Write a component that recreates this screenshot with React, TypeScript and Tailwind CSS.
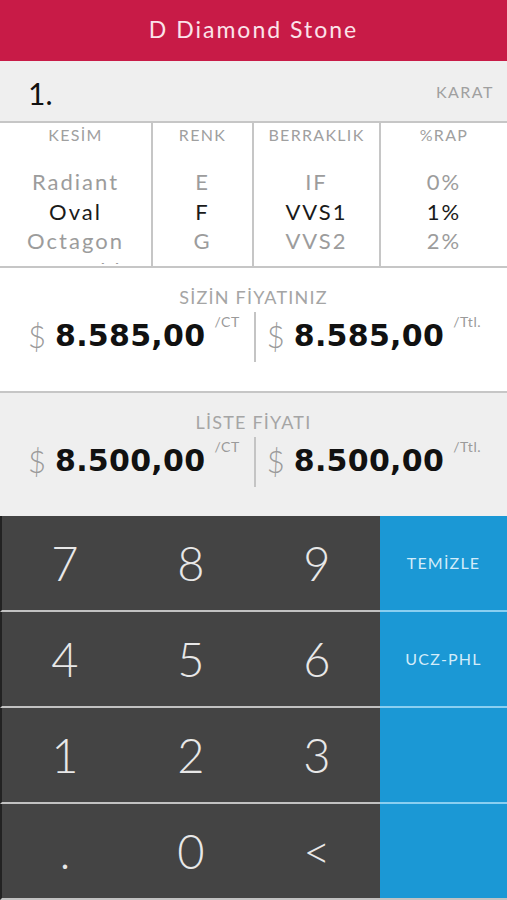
import React from "react";

const cols = [
  { h: "KESİM", items: ["Radiant", "Oval", "Octagon", "Emerald"] },
  { h: "RENK", items: ["E", "F", "G", "H"] },
  { h: "BERRAKLIK", items: ["IF", "VVS1", "VVS2", "VS1"] },
  { h: "%RAP", items: ["0%", "1%", "2%", "3%"] },
];

function Price({ amount, unit }: { amount: string; unit: string }) {
  return (
    <div className="flex items-start">
      <span className="text-[31px] leading-[36px] font-light text-[#9a9a9a] mr-[9px] font-['Lato']">$</span>
      <span className="text-[30px] leading-[36px] font-bold text-[#111] font-['DejaVu_Sans'] tracking-[0.3px]">{amount}</span>
      <span className="text-[14px] leading-[14px] text-[#9a9a9a] ml-[9px] mt-[-3px] font-['Lato'] tracking-[0.5px]">{unit}</span>
    </div>
  );
}

function PriceBlock({ label, amount, bg }: { label: string; amount: string; bg: string }) {
  return (
    <div className={`${bg} h-[123px] flex flex-col items-center pt-[18px]`}>
      <div className="text-[18px] leading-[22px] text-[#a5a5a5] tracking-[1.2px] font-['Lato']">{label}</div>
      <div className="flex items-start mt-[4px] ml-[2px]">
        <div className="mt-[6px]">
          <Price amount={amount} unit="/CT" />
        </div>
        <div className="w-[2px] h-[50px] bg-[#c4c4c4] ml-[14px] mr-[11px]" />
        <div className="mt-[6px]">
          <Price amount={amount} unit="/Ttl." />
        </div>
      </div>
    </div>
  );
}

const keys = [
  ["7", "8", "9", "TEMİZLE"],
  ["4", "5", "6", "UCZ-PHL"],
  ["1", "2", "3", ""],
  [".", "0", "<", ""],
];

export default function App() {
  return (
    <div className="w-[507px] h-[900px] overflow-hidden bg-white font-['Lato',sans-serif]">
      <div className="h-[61px] bg-[#c81b47] flex items-center justify-center pb-[3px]">
        <span className="text-[23px] text-[#fbe3ea] tracking-[2px]">D Diamond Stone</span>
      </div>
      <div className="h-[62px] bg-[#efefef] border-b-2 border-[#c6c6c6] flex items-center justify-between pl-[28px] pr-[13px]">
        <span className="text-[30px] text-[#111] mt-[4px]">1.</span>
        <span className="text-[16px] text-[#a0a0a0] tracking-[1.5px] mt-[2px]">KARAT</span>
      </div>
      <div className="grid grid-cols-[153px_101px_127px_1fr] h-[145px] border-b-2 border-[#c6c6c6]">
        {cols.map((c, i) => (
          <div key={i} className={`flex flex-col items-center ${i < 3 ? "border-r-2 border-[#c6c6c6]" : ""}`}>
            <div className="pt-[2px] h-[22px] text-[16px] leading-[20px] text-[#a0a0a0] tracking-[1.3px]">{c.h}</div>
            <div className="mt-[22px] h-[97px] overflow-hidden flex flex-col items-center w-full">
              {c.items.map((it, j) => (
                <div
                  key={j}
                  className={`h-[29.5px] shrink-0 leading-[29.5px] text-[22px] tracking-[2px] ${j === 1 ? "text-[#1a1a1a]" : "text-[#9c9c9c]"}`}
                >
                  {it}
                </div>
              ))}
            </div>
          </div>
        ))}
      </div>
      <div className="border-b-2 border-[#c6c6c6]">
        <PriceBlock label="SİZİN FİYATINIZ" amount="8.585,00" bg="bg-white" />
      </div>
      <PriceBlock label="LİSTE FİYATI" amount="8.500,00" bg="bg-[#efefef]" />
      <div className="flex flex-col">
        {keys.map((row, r) => (
          <div key={r} className="flex h-[96px]">
            <div className="flex w-[380px] bg-[#444444] border-l-2 border-l-[#222] border-b-2 border-b-[#c2c2c2]">
              {row.slice(0, 3).map((k, i) => (
                <div key={i} className="flex-1 flex items-center justify-center text-[47px] font-light text-[#e8e8e8]">
                  {k}
                </div>
              ))}
            </div>
            <div
              className={`flex-1 bg-[#1b98d5] flex items-center justify-center border-b-2 ${r === 3 ? "border-b-[#c2c2c2]" : "border-b-[#8acff1]"}`}
            >
              <span className="text-[16px] text-[#d3ecf9] tracking-[1.2px]">{row[3]}</span>
            </div>
          </div>
        ))}
      </div>
    </div>
  );
}
